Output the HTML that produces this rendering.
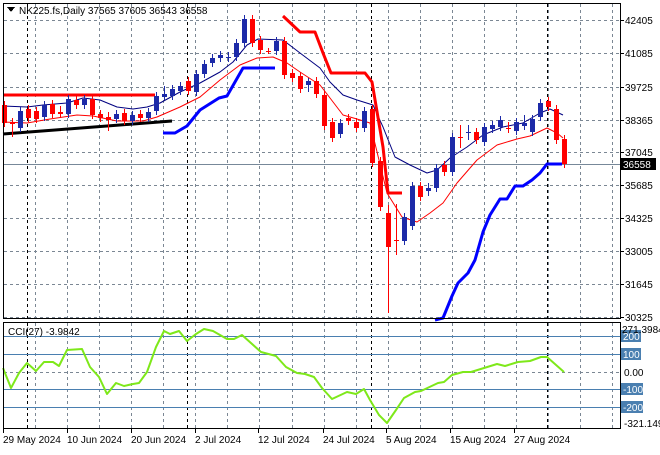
<!DOCTYPE html>
<html><head><meta charset="utf-8">
<style>
html,body{margin:0;padding:0;background:#fff;}
body{width:660px;height:450px;overflow:hidden;font-family:"Liberation Sans",sans-serif;}
svg text{font-family:"Liberation Sans",sans-serif;font-size:10px;fill:#000;}
</style></head>
<body>
<svg id="s" width="660" height="450" viewBox="0 0 660 450" xmlns="http://www.w3.org/2000/svg" shape-rendering="crispEdges">
<rect x="0" y="0" width="660" height="450" fill="#fff"/>
<g id="grid"></g>
<g id="lines"></g>
<g id="candles"></g>
<g id="ovl"></g>
<!-- borders -->
<rect x="3.5" y="3.5" width="617" height="315" fill="none" stroke="#000"/>
<rect x="3.5" y="322.5" width="617" height="106" fill="none" stroke="#000"/>
<!-- title -->
<polygon points="7,7 15,7 11,12" fill="#000"/>
<text x="19" y="14" font-size="11">NK225.fs,Daily  37565 37605 36543 36558</text>
<text x="8" y="335" font-size="11">CCI(27) -3.9842</text>
</svg>
<script>
var NS="http://www.w3.org/2000/svg";
function el(p,t,a){var e=document.createElementNS(NS,t);for(var k in a)e.setAttribute(k,a[k]);document.getElementById(p).appendChild(e);return e;}
// vertical grid
for(var x=35;x<620;x+=32.07){var xx=Math.round(x)+0.5;
 el('grid','line',{x1:xx,y1:4,x2:xx,y2:318,stroke:'#7b8794','stroke-dasharray':'3,3'});
 el('grid','line',{x1:xx,y1:323,x2:xx,y2:428,stroke:'#7b8794','stroke-dasharray':'3,3'});}
[27,187,371,547].forEach(function(x){
 el('grid','line',{x1:x+.5,y1:4,x2:x+.5,y2:318,stroke:'#000','stroke-dasharray':'3,3'});
 el('grid','line',{x1:x+.5,y1:323,x2:x+.5,y2:428,stroke:'#000','stroke-dasharray':'3,3'});});
// horizontal grid + price labels
var pl=[[20,'42405'],[53,'41085'],[87,'39725'],[120,'38365'],[152,'37045'],[185,'35685'],[218,'34325'],[251,'33005'],[284,'31645'],[317,'30325']];
pl.forEach(function(p){el('grid','line',{x1:4,y1:p[0]+.5,x2:620,y2:p[0]+.5,stroke:'#7b8794','stroke-dasharray':'3,3'});
 el('grid','line',{x1:620,y1:p[0]+.5,x2:624,y2:p[0]+.5,stroke:'#000'});
 var t=el('ovl','text',{x:625,y:p[0]+4});t.textContent=p[1];});
// current price line
el('grid','line',{x1:4,y1:164.5,x2:620,y2:164.5,stroke:'#778899'});
el('ovl','rect',{x:621,y:158,width:35,height:12,fill:'#000'});
var t=el('ovl','text',{x:623,y:168,fill:'#fff'});t.setAttribute('style','fill:#fff');t.textContent='36558';
// CCI levels
[[336,'200',1],[354,'100',1],[372,'0.00',0],[389,'-100',1],[407,'-200',1]].forEach(function(l){
 if(l[2]){el('grid','line',{x1:4,y1:l[0]+.5,x2:620,y2:l[0]+.5,stroke:'#4a7fb0'});
  el('ovl','rect',{x:621,y:l[0]-6,width:l[1].length>3?22:20,height:12,fill:'#4a7fb0'});
  var t=el('ovl','text',{x:623,y:l[0]+4});t.setAttribute('style','fill:#fff');t.textContent=l[1];}
 else{el('grid','line',{x1:4,y1:l[0]+.5,x2:620,y2:l[0]+.5,stroke:'#7b8794','stroke-dasharray':'3,3'});
  var t=el('ovl','text',{x:624,y:l[0]+4});t.textContent=l[1];}});
var t=el('ovl','text',{x:622,y:333});t.textContent='271.3984';
var t=el('ovl','text',{x:624,y:427});t.textContent='-321.149';
// dates
[[3,'29 May 2024'],[67,'10 Jun 2024'],[131,'20 Jun 2024'],[195,'2 Jul 2024'],[258,'12 Jul 2024'],[323,'24 Jul 2024'],[386,'5 Aug 2024'],[450,'15 Aug 2024'],[514,'27 Aug 2024']].forEach(function(d){
 el('ovl','line',{x1:d[0]+.5,y1:429,x2:d[0]+.5,y2:433,stroke:'#000'});
 var t=el('ovl','text',{x:d[0],y:443});t.textContent=d[1];});
function pl_(pts,c,w){el('lines','polyline',{points:pts,fill:'none',stroke:c,'stroke-width':w,'shape-rendering':'auto','stroke-linejoin':'round'});}
// navy MA
pl_('3,106 27,107 43,105 67,103 83,98 100,100 117,107 133,109 147,107 160,103 180,92 200,83 220,72 233,62 247,45 258,39 283,40 300,53 320,68 330,82 343,95 357,100 373,105 383,127 395,157 410,165 427,173 437,170 450,158 467,147 483,135 503,127 523,123 540,113 550,109 563,115','#000080',1);
// red MA
pl_('3,122 27,123 50,119 77,115 93,116 117,121 143,121 157,117 180,107 200,97 220,80 240,65 257,58 273,57 287,63 300,72 320,85 330,98 343,115 357,119 370,123 387,193 402,217 417,222 430,213 443,203 457,183 477,160 497,145 517,139 530,136 547,128 557,133 563,138','#ff0000',1);
// thick lines
pl_('4,95 155,95','#ff0000',3);
pl_('3,134 172,121','#000',3);
pl_('163,133 175,133 187,126 200,110 219,98 227,96 243,68 275,68','#0000ff',3);
pl_('283,16 300,32 315,32 323,53 331,73 365,73 372,82 383,147 388,193 402,193','#ff0000',3);
pl_('435,320 443,318 452,296 458,283 468,273 475,260 483,232 490,215 500,199 507,199 515,186 523,186 532,180 540,173 547,164 562,164','#0000ff',3);
// candles
var C=[['r',105,123],['r',122,124,118,137],['b',111,128],['r',109,118],['r',111,119],['b',105,117],['r',104,114],['r',112,114,106,118],['b',99,114],['r',100,105],['b',99,105],['r',99,115],['r',114,118],['r',117,120,112,131],['b',114,119],['r',113,121],['b',115,121],['r',114,118],['b',112,118],['b',96,111],
['b',94,97,86,100],['b',89,96],['b',86,91],['r',81,91],['b',74,92],['b',64,74],['b',58,63],['b',55,58],['b',57,58,52,62],['b',43,57],['b',19,43],['r',19,43],['r',40,50],['r',51,52,48,54],['b',41,51],['r',41,75],['r',73,78],['r',76,89],['b',81,85,78,92],['r',81,94],
['r',95,126],['r',122,138],['b',123,134],['r',118,121],['r',122,128],['b',111,128],['r',109,163],['r',161,207],['r',213,247,205,313],['r',240,241,204,255],['b',217,241],['b',186,226],['r',186,197],['b',188,191,183,196],['b',168,188],['r',165,172],['b',137,172],['r',137,138,125,148],['b',132,133,125,140],['r',132,140],
['b',127,142],['b',125,129],['b',120,127],['r',128,129,122,133],['b',122,131],['b',123,126,115,130],['b',119,132],['b',103,117],['r',101,107],['r',109,140],['r',139,164]];
C.forEach(function(c,i){var x=4+8*i;var col=c[0]=='r'?'#ff0000':'#1c2aa8';
 var wt=c.length>3?c[3]:c[1]-4, wb=c.length>3?c[4]:c[2]+4;
 el('candles','rect',{x:x,y:wt,width:1,height:wb-wt,fill:col});
 var h=Math.max(c[2]-c[1],1);
 el('candles','rect',{x:x-2,y:c[1],width:5,height:h,fill:col});});
// CCI line
el('lines','polyline',{points:'3,368 11,388 19,373 27,363 36,371 44,362 53,362 59,366 67,350 82,349 90,367 99,377 107,394 116,383 124,386 133,384 139,383 147,372 156,347 164,331 170,334 179,331 187,341 196,334 204,329 213,331 227,339 234,339 242,335 261,352 276,356 286,367 297,373 305,374 314,377 322,388 332,399 347,392 356,394 364,389 370,400 379,415 387,423 396,410 404,398 415,392 421,391 438,383 444,382 452,375 463,372 471,372 484,368 497,364 505,366 518,362 530,361 541,357 547,357 564,372',fill:'none',stroke:'#7ee81a','stroke-width':2,'shape-rendering':'auto','stroke-linejoin':'round'});
</script>
</body></html>
